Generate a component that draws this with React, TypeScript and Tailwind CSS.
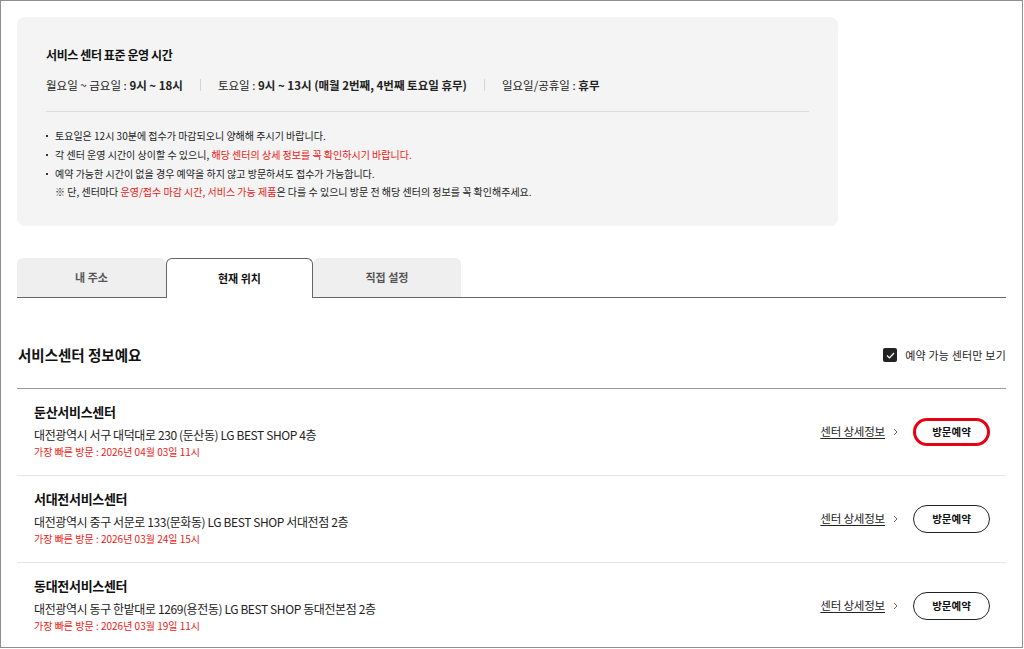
import React from 'react';

type Center = {
  name: string;
  address: string;
  earliest: string;
  highlight?: boolean;
};

const centers: Center[] = [
  { name: '둔산서비스센터', address: '대전광역시 서구 대덕대로 230 (둔산동) LG BEST SHOP 4층', earliest: '2026년 04월 03일 11시', highlight: true },
  { name: '서대전서비스센터', address: '대전광역시 중구 서문로 133(문화동) LG BEST SHOP 서대전점 2층', earliest: '2026년 03월 24일 15시' },
  { name: '동대전서비스센터', address: '대전광역시 동구 한밭대로 1269(용전동) LG BEST SHOP 동대전본점 2층', earliest: '2026년 03월 19일 11시' },
];

function Bullet({ children }: { children: React.ReactNode }) {
  return (
    <li className="flex leading-[18px]">
      <span className="w-[9px] shrink-0 pt-[8px]">
        <span className="block size-[2px] bg-[#333]" />
      </span>
      <div>{children}</div>
    </li>
  );
}

function CenterRow({ center }: { center: Center }) {
  return (
    <li className="flex items-center justify-between border-b border-[#e5e5e5] pt-[14px] pb-[15px] pl-[17px] pr-[16px]">
      <div>
        <h3 className="text-[13px] font-bold leading-[18px] tracking-[-0.3px] text-[#111]">{center.name}</h3>
        <p className="mt-[5px] text-[12px] leading-[18px] tracking-[-0.4px] text-[#222]">{center.address}</p>
        <p className="text-[10px] leading-[16px] text-[#ea1917]">가장 빠른 방문 : {center.earliest}</p>
      </div>
      <div className="flex items-center">
        <a href="#" className="text-[11.5px] tracking-[-0.2px] text-[#222] underline underline-offset-2">센터 상세정보</a>
        <svg width="5" height="8" viewBox="0 0 5 8" className="ml-[8px]">
          <polyline points="1,1 4,4 1,7" fill="none" stroke="#666" strokeWidth="1" />
        </svg>
        <button
          type="button"
          className={
            center.highlight
              ? 'ml-[15px] flex h-[28px] w-[77px] items-center justify-center rounded-full border-[3px] border-[#e60012] bg-white text-[10.5px] font-bold text-[#111]'
              : 'ml-[15px] flex h-[28px] w-[77px] items-center justify-center rounded-full border border-[#222] bg-white text-[10.5px] font-bold text-[#111]'
          }
        >
          방문예약
        </button>
      </div>
    </li>
  );
}

export default function App() {
  return (
    <div className="h-[649px] w-[1024px] overflow-hidden bg-white font-['Noto_Sans_CJK_KR',sans-serif] text-[#111]">
      <div className="h-[648px] w-[1023px] overflow-hidden border border-[#8f8f8f] px-[16px] pt-[16px]">
        <section className="h-[209px] w-[821px] rounded-[8px] bg-[#f4f4f4] px-[29px] pt-[29px]">
          <h2 className="text-[12px] font-bold leading-[18px] tracking-[-0.4px]">서비스 센터 표준 운영 시간</h2>
          <div className="mt-[12px] flex items-center text-[11.5px] leading-[18px] text-[#222]">
            <span>월요일 ~ 금요일 : <b>9시 ~ 18시</b></span>
            <span className="mx-[17px] h-[12px] w-px bg-[#d5d5d5]" />
            <span>토요일 : <b>9시 ~ 13시 (매월 2번째, 4번째 토요일 휴무)</b></span>
            <span className="mx-[17px] h-[12px] w-px bg-[#d5d5d5]" />
            <span>일요일/공휴일 : <b>휴무</b></span>
          </div>
          <div className="mt-[17px] h-px bg-[#dedede]" />
          <ul className="mt-[15px] flex flex-col gap-[1px] text-[10px] text-[#222]">
            <Bullet>토요일은 12시 30분에 접수가 마감되오니 양해해 주시기 바랍니다.</Bullet>
            <Bullet>
              각 센터 운영 시간이 상이할 수 있으니, <span className="text-[#ea1917]">해당 센터의 상세 정보를 꼭 확인하시기 바랍니다.</span>
            </Bullet>
            <Bullet>
              예약 가능한 시간이 없을 경우 예약을 하지 않고 방문하셔도 접수가 가능합니다.
              <p className="leading-[17px]">
                ※ 단, 센터마다 <span className="text-[#ea1917]">운영/접수 마감 시간, 서비스 가능 제품</span>은 다를 수 있으니 방문 전 해당 센터의 정보를 꼭 확인해주세요.
              </p>
            </Bullet>
          </ul>
        </section>

        <div className="mt-[32px] flex items-end border-b border-[#666]">
          <button type="button" className="h-[39px] w-[149px] rounded-t-[6px] bg-[#efefef] text-[11px] font-bold text-[#555]">내 주소</button>
          <button type="button" className="-mb-px h-[40px] w-[147px] rounded-t-[6px] border border-b-0 border-[#666] bg-white text-[11px] font-bold text-[#111]">현재 위치</button>
          <button type="button" className="h-[39px] w-[148px] rounded-t-[6px] bg-[#efefef] text-[11px] font-bold text-[#555]">직접 설정</button>
        </div>

        <div className="flex items-center justify-between border-b border-[#999] pt-[47px] pb-[23px] pl-[1px]">
          <h2 className="text-[14.5px] font-bold leading-[20px]">서비스센터 정보예요</h2>
          <label className="flex items-center text-[11px] tracking-[0.2px] text-[#222]">
            <span className="flex size-[14px] items-center justify-center rounded-[2px] bg-[#222]">
              <svg width="9" height="7" viewBox="0 0 9 7">
                <polyline points="1,3.5 3.5,6 8,1" fill="none" stroke="#fff" strokeWidth="1.2" />
              </svg>
            </span>
            <span className="ml-[8px]">예약 가능 센터만 보기</span>
          </label>
        </div>

        <ul>
          {centers.map((c) => (
            <CenterRow key={c.name} center={c} />
          ))}
        </ul>
      </div>
    </div>
  );
}
